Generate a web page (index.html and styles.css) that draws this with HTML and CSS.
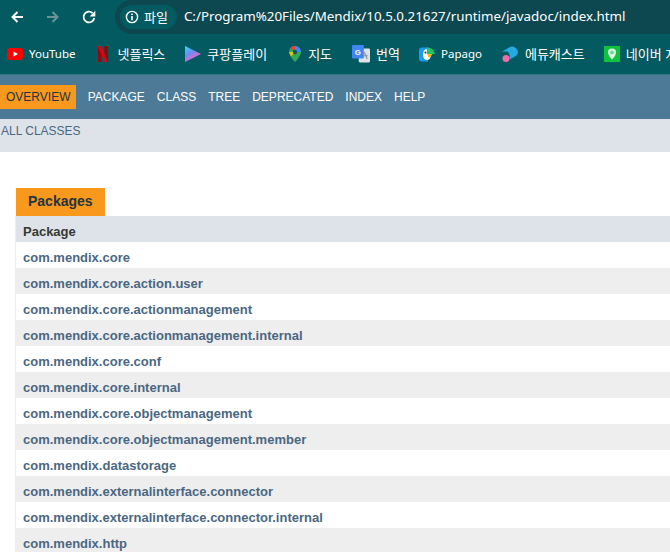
FILE: index.html
```html
<!DOCTYPE html>
<html lang="ko">
<head>
<meta charset="utf-8">
<title>Overview</title>
<link rel="stylesheet" href="styles.css">
</head>
<body>
<header class="chrome">
  <div class="toolbar">
    <svg class="nav-icon back" viewBox="0 0 16 16"><path d="M14 8H3.500M8.500 3L3.500 8l5 5" fill="none" stroke="#fff" stroke-width="2"/></svg>
    <svg class="nav-icon fwd" viewBox="0 0 16 16"><path d="M2 8h10.500M7.500 3l5 5-5 5" fill="none" stroke="#6f9398" stroke-width="2"/></svg>
    <svg class="nav-icon reload" viewBox="0 0 16 16"><path d="M13.300 9a5.400 5.400 0 1 1-1.700-5" fill="none" stroke="#fff" stroke-width="1.800"/><path d="M14.300 1.800V7.500H8.600z" fill="#fff"/></svg>
    <div class="omnibox">
      <div class="chip">
        <svg class="info" viewBox="0 0 14 14"><circle cx="7" cy="7" r="5.600" fill="none" stroke="#fff" stroke-width="1.400"/><path d="M6.200 6h1.600v4.200H6.200zM6.200 3.600h1.600v1.500H6.200z" fill="#fff"/></svg>
        <span>파일</span>
      </div>
      <span class="url">C:/Program%20Files/Mendix/10.5.0.21627/runtime/javadoc/index.html</span>
    </div>
  </div>
  <div class="bookmarks">
    <div class="bm bm-lat bm-yt"><svg viewBox="0 0 16 16"><rect y="2" width="16" height="12" rx="3" fill="#f00"/><path d="M6.500 5.500v5L11 8z" fill="#fff"/></svg><span>YouTube</span></div>
    <div class="bm bm-nf"><svg viewBox="0 0 16 16"><path d="M3 0h3.600v16L3 16.500zM9.400 0H13v16.500L9.400 16z" fill="#8f0a10"/><path d="M3 0h3.600l6.400 16.500-3.600-.5z" fill="#d40813"/></svg><span>넷플릭스</span></div>
    <div class="bm bm-play"><svg viewBox="0 0 16 16"><defs><linearGradient id="pl" x1="0" y1="0" x2=".6" y2="1"><stop offset="0" stop-color="#2fe0f5"/><stop offset=".45" stop-color="#6b8df5"/><stop offset=".8" stop-color="#d66bd0"/><stop offset="1" stop-color="#ff9a6b"/></linearGradient></defs><path d="M0 0l16 8L0 16z" fill="url(#pl)"/></svg><span>쿠팡플레이</span></div>
    <div class="bm bm-map"><svg viewBox="0 0 16 16"><path d="M8 0a6 6 0 0 0-6 6c0 4 6 10 6 10s6-6 6-10a6 6 0 0 0-6-6z" fill="#34a853"/><path d="M3.500 2A6 6 0 0 1 8 0v6z" fill="#ea4335"/><path d="M8 0a6 6 0 0 1 6 6H8z" fill="#4285f4"/><path d="M2 6h6l-4 4.500z" fill="#fbbc04"/><circle cx="8" cy="6" r="2.200" fill="#0a5a60"/></svg><span>지도</span></div>
    <div class="bm bm-tr"><svg viewBox="0 0 16 16"><rect x="6" y="3" width="10" height="12.500" rx="1" fill="#dfe3e6"/><path d="M11 6.500l2.500 6M9 9.500h5" stroke="#8a9296" fill="none"/><rect width="10.500" height="12" rx="1" fill="#4285f4"/><text class="tr-g" x="5.200" y="8.500" text-anchor="middle">G</text></svg><span>번역</span></div>
    <div class="bm bm-lat bm-pa"><svg viewBox="0 0 16 16"><path d="M3 1.500h6v14H3a3 3 0 0 1-3-3V4.500a3 3 0 0 1 3-3z" fill="#1e9bf0"/><path d="M9 1.500a6.500 6.500 0 0 0-5 9c1 3 3 5 5 5z" fill="#1e9bf0"/><ellipse cx="8" cy="8.500" rx="4" ry="5.500" fill="#fff"/><path d="M8 1.500a7.500 7.500 0 0 1 8 6.500H8z" fill="#1ec760"/><path d="M8 8h5.500L10 12z" fill="#ffb400"/><circle cx="6.500" cy="6.500" r="1" fill="#123"/></svg><span>Papago</span></div>
    <div class="bm bm-ed"><svg viewBox="0 0 16 16"><path d="M0 5.500L8 1a6 6 0 0 1 8 5.500 4.500 4.500 0 0 1-3 4L7.500 13.500V9A4 4 0 0 0 4 5.500z" fill="#26a9e0"/><circle cx="4" cy="12.500" r="3.500" fill="#f06aa8"/></svg><span>에듀캐스트</span></div>
    <div class="bm bm-nv"><svg viewBox="0 0 16 16"><rect width="16" height="16" fill="#0ec43e"/><path d="M8 2.500a4 4 0 0 0-4 4c0 3 4 7 4 7s4-4 4-7a4 4 0 0 0-4-4z" fill="#e4fae9"/><circle cx="8" cy="6.500" r="2" fill="#69d98a"/></svg><span>네이버 지도</span></div>
  </div>
</header>
<nav class="topnav">
  <a class="nav-item active">OVERVIEW</a>
  <a class="nav-item">PACKAGE</a>
  <a class="nav-item">CLASS</a>
  <a class="nav-item">TREE</a>
  <a class="nav-item">DEPRECATED</a>
  <a class="nav-item">INDEX</a>
  <a class="nav-item">HELP</a>
</nav>
<div class="subnav">ALL CLASSES</div>
<main class="content">
  <div class="caption">Packages</div>
  <div class="table">
    <div class="head">Package</div>
    <div class="row">com.mendix.core</div>
    <div class="row alt">com.mendix.core.action.user</div>
    <div class="row">com.mendix.core.actionmanagement</div>
    <div class="row alt">com.mendix.core.actionmanagement.internal</div>
    <div class="row">com.mendix.core.conf</div>
    <div class="row alt">com.mendix.core.internal</div>
    <div class="row">com.mendix.core.objectmanagement</div>
    <div class="row alt">com.mendix.core.objectmanagement.member</div>
    <div class="row">com.mendix.datastorage</div>
    <div class="row alt">com.mendix.externalinterface.connector</div>
    <div class="row">com.mendix.externalinterface.connector.internal</div>
    <div class="row alt">com.mendix.http</div>
  </div>
</main>
</body>
</html>
```
FILE: styles.css
```css
html, body { margin: 0; padding: 0; height: 100%; overflow: hidden; background: #fff; }
body { font-family: "Liberation Sans", Arial, sans-serif; }

.chrome { height: 75px; box-sizing: border-box; background: #035a60; border-bottom: 1px solid #2f7a80; display: flex; flex-direction: column; }
.toolbar { height: 34px; display: flex; align-items: center; }
.nav-icon { width: 16px; height: 16px; flex: none; }
.back { margin-left: 9px; }
.fwd { margin-left: 20px; }
.reload { margin-left: 20px; }
.omnibox { margin-left: 18px; flex: 1; height: 34px; background: #0d474f; border-radius: 17px 0 0 17px; display: flex; align-items: center; }
.chip { height: 24px; margin-left: 5px; padding: 0 9px 0 5px; background: #035a60; border-radius: 12px; display: flex; align-items: center; gap: 5px; color: #fff; font: 13px "Noto Sans CJK KR", sans-serif; }
.chip span { margin-bottom: 2px; }
.info { width: 14px; height: 14px; }
.url { margin-left: 7px; color: #fff; font: 13.35px/18px "Noto Sans", "Open Sans", sans-serif; white-space: nowrap; position: relative; top: -1px; }

.bookmarks { height: 40px; display: flex; align-items: center; overflow: hidden; white-space: nowrap; padding-left: 7px; box-sizing: border-box; }
.bm { display: flex; align-items: center; gap: 6px; color: #fff; font: 13px "Noto Sans CJK KR", sans-serif; flex: none; }
.bm span { margin-bottom: 2px; }
.bm-lat { font: 11.5px "Noto Sans", sans-serif; }
.bm svg { width: 16px; height: 16px; flex: none; }
.bm-nf { margin-left: 20px; }
.bm-play { margin-left: 20px; }
.bm-map { margin-left: 20px; gap: 5px; }
.bm-tr { margin-left: 20px; }
.bm-tr svg { width: 18px; height: 18px; }
.bm-pa { margin-left: 19px; }
.bm-ed { margin-left: 20px; gap: 7px; }
.bm-nv { margin-left: 19px; }
.tr-g { fill: #fff; font: bold 7px "Liberation Sans", sans-serif; }

.topnav { height: 44px; background: #4d7a97; display: flex; align-items: center; font-size: 12px; }
.nav-item { color: #fff; margin-right: 12px; line-height: 24px; }
.active { background: #f8981d; color: #253441; padding: 0 5px 0 6px; width: 65px; margin-right: 11.7px; }

.subnav { height: 33px; background: #dee3e9; color: #4a6782; font-size: 12px; padding: 5px 0 0 1px; box-sizing: border-box; }

.content { padding: 36px 0 0 15px; }
.caption { width: 89px; height: 28px; box-sizing: border-box; margin-left: 1px; background: #f8981d; color: #253441; font-weight: bold; font-size: 14px; line-height: 27px; padding-left: 12px; }
.table { border-left: 1px solid #eee; }
.head, .row { height: 26px; box-sizing: border-box; padding: 6px 0 0 7px; line-height: 20px; font-size: 13px; font-weight: bold; }
.head { background: #dee3e9; color: #353833; }
.row { background: #fff; color: #4a6782; }
.alt { background: #eeeeef; }
```
